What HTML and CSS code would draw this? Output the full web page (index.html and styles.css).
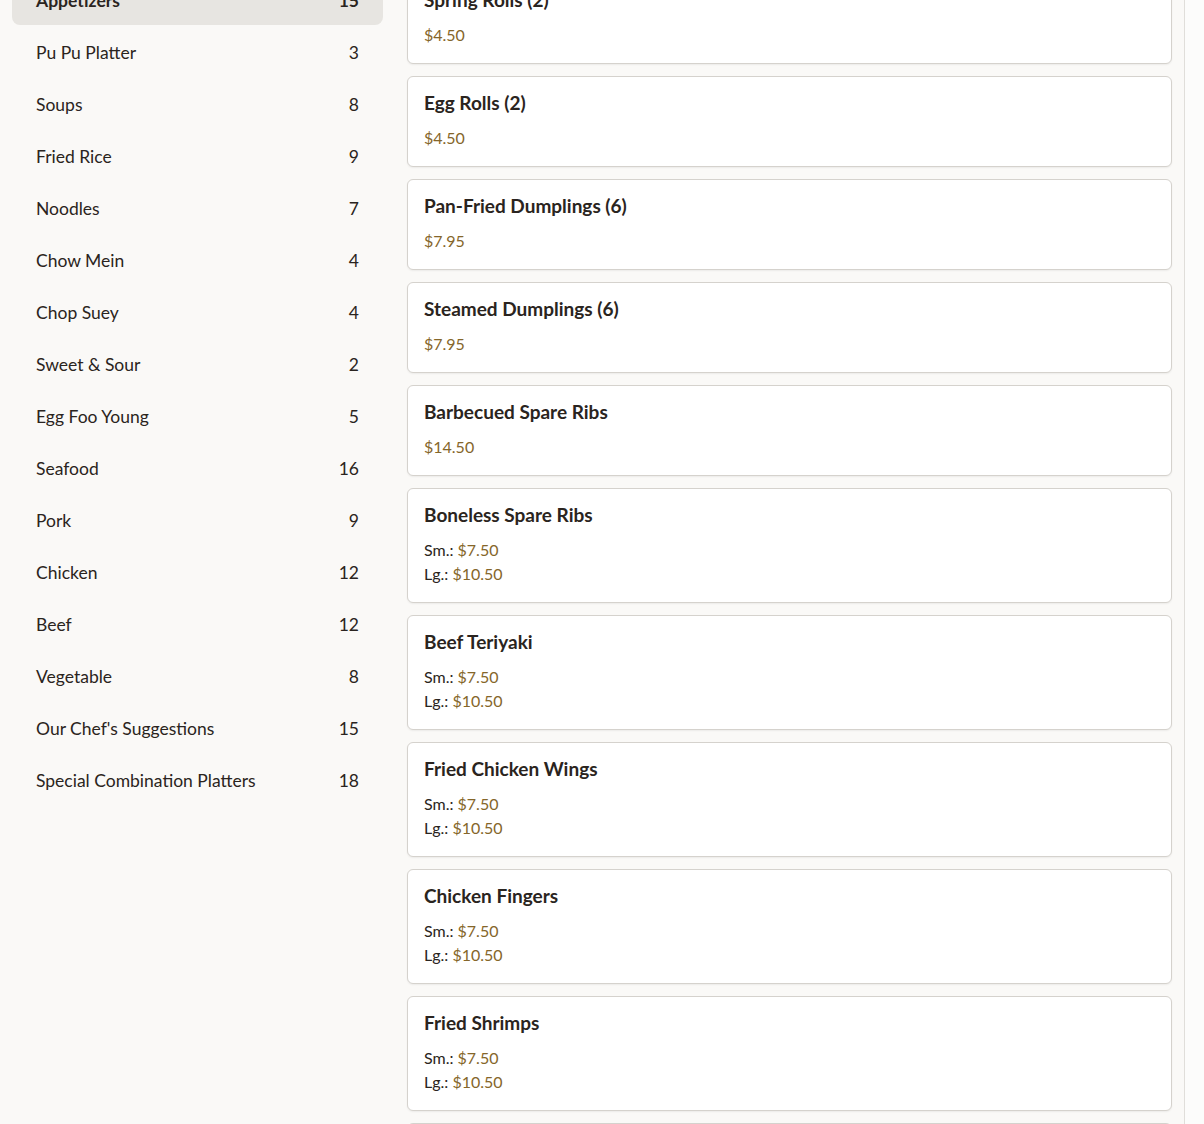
FILE: index.html
```html
<!DOCTYPE html>
<html lang="en">
<head>
    <meta charset="UTF-8">
    <meta name="viewport" content="width=device-width, initial-scale=1.0">
    <title>Menu</title>
    <link rel="stylesheet" href="styles.css">
</head>
<body>
    <div class="page">
        <div class="layout">
            <nav class="categories">
                <div class="category active"><span>Appetizers</span><span class="count">15</span></div>
                <div class="category"><span>Pu Pu Platter</span><span class="count">3</span></div>
                <div class="category"><span>Soups</span><span class="count">8</span></div>
                <div class="category"><span>Fried Rice</span><span class="count">9</span></div>
                <div class="category"><span>Noodles</span><span class="count">7</span></div>
                <div class="category"><span>Chow Mein</span><span class="count">4</span></div>
                <div class="category"><span>Chop Suey</span><span class="count">4</span></div>
                <div class="category"><span>Sweet &amp; Sour</span><span class="count">2</span></div>
                <div class="category"><span>Egg Foo Young</span><span class="count">5</span></div>
                <div class="category"><span>Seafood</span><span class="count">16</span></div>
                <div class="category"><span>Pork</span><span class="count">9</span></div>
                <div class="category"><span>Chicken</span><span class="count">12</span></div>
                <div class="category"><span>Beef</span><span class="count">12</span></div>
                <div class="category"><span>Vegetable</span><span class="count">8</span></div>
                <div class="category"><span>Our Chef's Suggestions</span><span class="count">15</span></div>
                <div class="category"><span>Special Combination Platters</span><span class="count">18</span></div>
            </nav>

            <main class="items">
                <div class="item">
                    <div class="item-name">Spring Rolls (2)</div>
                    <div class="price-line"><span class="price">$4.50</span></div>
                </div>
                <div class="item">
                    <div class="item-name">Egg Rolls (2)</div>
                    <div class="price-line"><span class="price">$4.50</span></div>
                </div>
                <div class="item">
                    <div class="item-name">Pan-Fried Dumplings (6)</div>
                    <div class="price-line"><span class="price">$7.95</span></div>
                </div>
                <div class="item">
                    <div class="item-name">Steamed Dumplings (6)</div>
                    <div class="price-line"><span class="price">$7.95</span></div>
                </div>
                <div class="item">
                    <div class="item-name">Barbecued Spare Ribs</div>
                    <div class="price-line"><span class="price">$14.50</span></div>
                </div>
                <div class="item">
                    <div class="item-name">Boneless Spare Ribs</div>
                    <div class="price-line">Sm.: <span class="price">$7.50</span></div>
                    <div class="price-line">Lg.: <span class="price">$10.50</span></div>
                </div>
                <div class="item">
                    <div class="item-name">Beef Teriyaki</div>
                    <div class="price-line">Sm.: <span class="price">$7.50</span></div>
                    <div class="price-line">Lg.: <span class="price">$10.50</span></div>
                </div>
                <div class="item">
                    <div class="item-name">Fried Chicken Wings</div>
                    <div class="price-line">Sm.: <span class="price">$7.50</span></div>
                    <div class="price-line">Lg.: <span class="price">$10.50</span></div>
                </div>
                <div class="item">
                    <div class="item-name">Chicken Fingers</div>
                    <div class="price-line">Sm.: <span class="price">$7.50</span></div>
                    <div class="price-line">Lg.: <span class="price">$10.50</span></div>
                </div>
                <div class="item">
                    <div class="item-name">Fried Shrimps</div>
                    <div class="price-line">Sm.: <span class="price">$7.50</span></div>
                    <div class="price-line">Lg.: <span class="price">$10.50</span></div>
                </div>
                <div class="item">
                    <div class="item-name">Crab Rangoon (6)</div>
                    <div class="price-line"><span class="price">$7.25</span></div>
                </div>
            </main>
        </div>
        <div class="scroll-track"></div>
    </div>
</body>
</html>
```

FILE: styles.css
```css
* {
    margin: 0;
    padding: 0;
    box-sizing: border-box;
}

html, body {
    height: 100%;
    overflow: hidden;
}

body {
    font-family: Lato, 'Noto Sans', sans-serif;
    background: #faf9f7;
    color: #2a2420;
}

.page {
    display: flex;
    height: 100%;
}

/* page is shown scrolled a little, so the first row sits above the top edge */
.layout {
    flex: 1;
    display: flex;
    gap: 24px;
    align-items: flex-start;
    padding: 0 12px;
    margin-top: -27px;
}

.categories {
    width: 371px;
    display: flex;
    flex-direction: column;
}

.category {
    display: flex;
    justify-content: space-between;
    padding: 16px 24px 12px;
    font-size: 17.5px;
    line-height: 24px;
    border-radius: 8px;
}

.category.active {
    background: #e7e5e1;
    font-weight: 700;
}

.items {
    flex: 1;
    display: flex;
    flex-direction: column;
    gap: 12px;
}

.item {
    background: #fff;
    border: 1px solid #d5d2cd;
    border-radius: 6px;
    padding: 16px;
    box-shadow: 0 1px 2px rgba(0, 0, 0, 0.06);
}

.item-name {
    font-size: 19px;
    font-weight: 700;
    line-height: 20px;
    margin-bottom: 13px;
}

.price-line {
    font-size: 16px;
    line-height: 24px;
}

.price {
    color: #85662a;
}

.scroll-track {
    width: 20px;
    border-left: 1px solid #e0deda;
    background: #fcfcfb;
}
```
